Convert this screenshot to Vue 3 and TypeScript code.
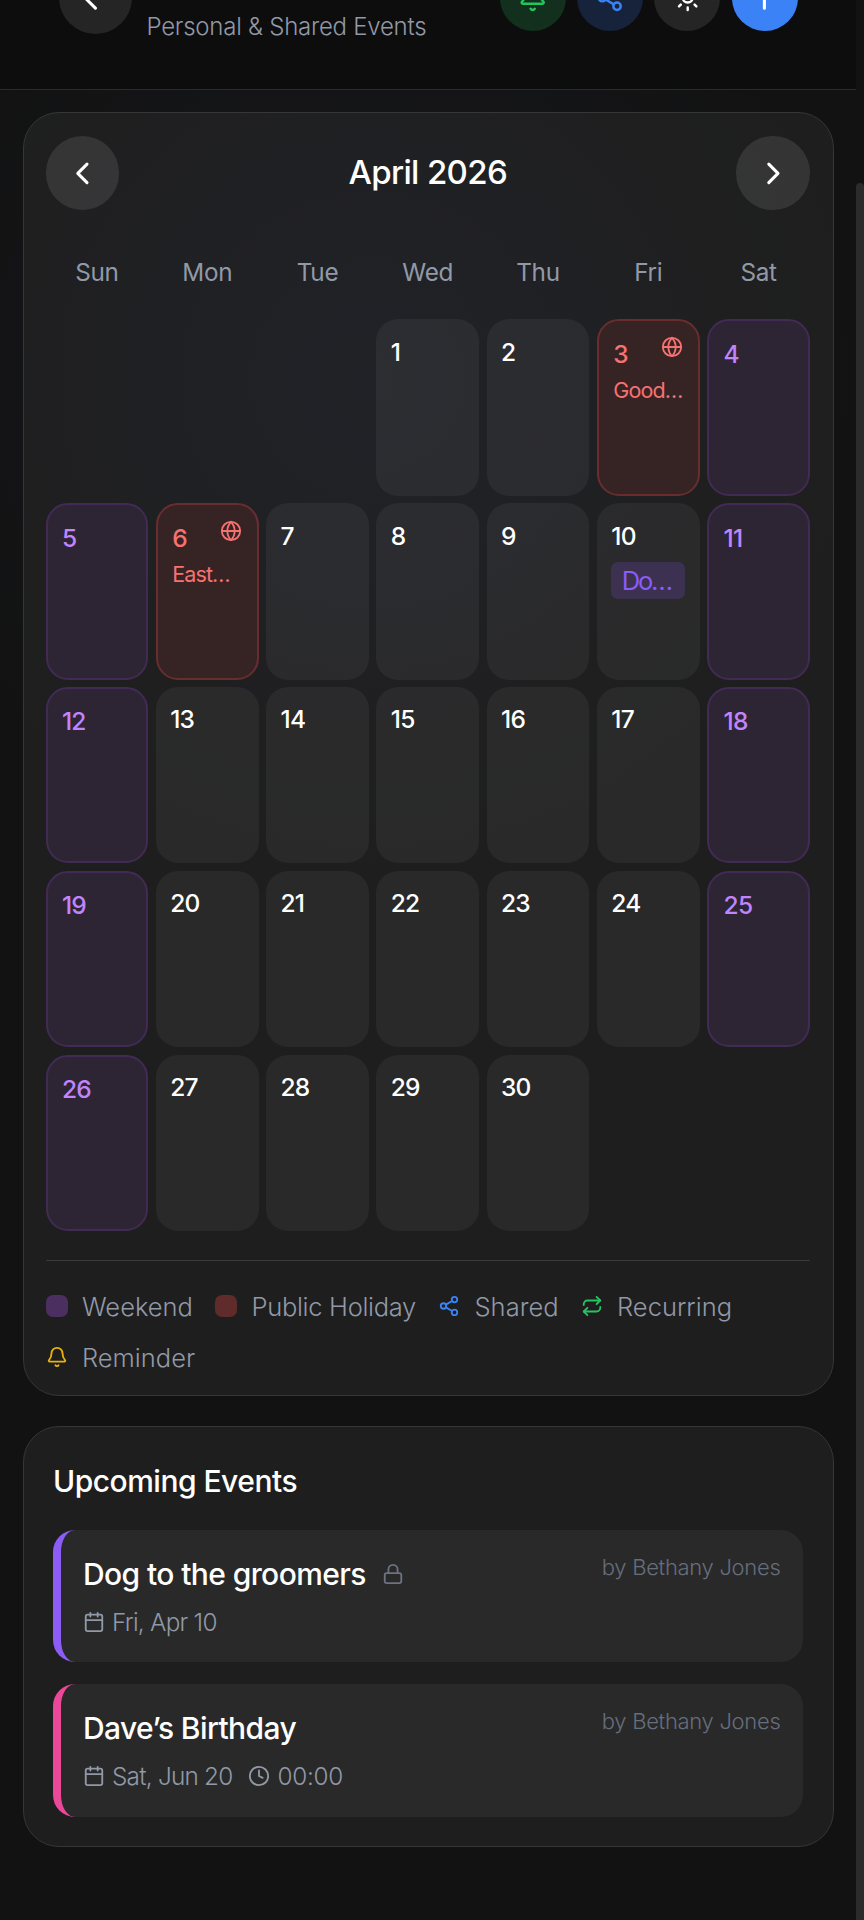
<script setup lang="ts">
interface DayCell {
  day: number | null
  kind: 'plain' | 'weekend' | 'holiday'
  holiday?: string
  event?: string
}
interface EventItem {
  title: string
  date: string
  time?: string
  author: string
  tone: 'violet' | 'pink'
  locked?: boolean
}

const weekdays: string[] = ['Sun', 'Mon', 'Tue', 'Wed', 'Thu', 'Fri', 'Sat']
const holidays: Record<number, string> = { 3: 'Good…', 6: 'East…' }
const dayEvents: Record<number, string> = { 10: 'Do…' }
const firstWeekday = 3

const cells: DayCell[] = []
for (let i = 0; i < firstWeekday; i++) cells.push({ day: null, kind: 'plain' })
for (let d = 1; d <= 30; d++) {
  const col = (d - 1 + firstWeekday) % 7
  const kind = holidays[d] ? 'holiday' : col === 0 || col === 6 ? 'weekend' : 'plain'
  cells.push({ day: d, kind, holiday: holidays[d], event: dayEvents[d] })
}

const events: EventItem[] = [
  { title: 'Dog to the groomers', date: 'Fri, Apr 10', author: 'by Bethany Jones', tone: 'violet', locked: true },
  { title: 'Dave’s Birthday', date: 'Sat, Jun 20', time: '00:00', author: 'by Bethany Jones', tone: 'pink' },
]
</script>

<template>
  <div class="screen">
    <div class="page">
      <header class="topbar">
        <button class="round back">
          <svg class="icon lg" viewBox="0 0 24 24"><path d="m12 19-7-7 7-7M19 12H5" /></svg>
        </button>
        <div class="heading">
          <h1>My Calendar</h1>
          <p>Personal &amp; Shared Events</p>
        </div>
        <div class="actions">
          <button class="round green">
            <svg class="icon md" viewBox="0 0 24 24"><path d="M10.268 21a2 2 0 0 0 3.464 0M3.262 15.326A1 1 0 0 0 4 17h16a1 1 0 0 0 .74-1.673C19.41 13.956 18 12.499 18 8A6 6 0 0 0 6 8c0 4.499-1.411 5.956-2.738 7.326" /></svg>
          </button>
          <button class="round blue">
            <svg class="icon md" viewBox="0 0 24 24"><circle cx="18" cy="5" r="3" /><circle cx="6" cy="12" r="3" /><circle cx="18" cy="19" r="3" /><path d="m8.59 13.51 6.83 3.98M15.41 6.51l-6.82 3.98" /></svg>
          </button>
          <button class="round">
            <svg class="icon md" viewBox="0 0 24 24"><circle cx="12" cy="12" r="4" /><path d="M12 2v2M12 20v2M4.93 4.93l1.41 1.41M17.66 17.66l1.41 1.41M2 12h2M20 12h2M6.34 17.66l-1.41 1.41M19.07 4.93l-1.41 1.41" /></svg>
          </button>
          <button class="round primary">
            <svg class="icon lg" viewBox="0 0 24 24"><path d="M5 12h14M12 5v14" /></svg>
          </button>
        </div>
      </header>

      <main class="content">
        <section class="card calendar">
          <div class="month-bar">
            <button class="round nav">
              <svg class="icon lg" viewBox="0 0 24 24"><path d="m15 18-6-6 6-6" /></svg>
            </button>
            <h2>April 2026</h2>
            <button class="round nav">
              <svg class="icon lg" viewBox="0 0 24 24"><path d="m9 18 6-6-6-6" /></svg>
            </button>
          </div>

          <div class="weekdays">
            <span v-for="w in weekdays" :key="w">{{ w }}</span>
          </div>

          <div class="grid">
            <div v-for="(c, i) in cells" :key="i" class="cell" :class="[c.kind, { empty: c.day === null }]">
              <template v-if="c.day !== null">
                <div class="cell-head">
                  <span class="num">{{ c.day }}</span>
                  <svg v-if="c.holiday" class="icon sm" viewBox="0 0 24 24"><circle cx="12" cy="12" r="10" /><path d="M12 2a14.5 14.5 0 0 0 0 20 14.5 14.5 0 0 0 0-20M2 12h20" /></svg>
                </div>
                <div v-if="c.holiday" class="holiday-name">{{ c.holiday }}</div>
                <div v-if="c.event" class="chip">{{ c.event }}</div>
              </template>
            </div>
          </div>

          <div class="legend">
            <span class="key"><i class="swatch weekend-key"></i>Weekend</span>
            <span class="key holiday-label"><i class="swatch holiday-key"></i>Public Holiday</span>
            <span class="key">
              <svg class="icon sm share" viewBox="0 0 24 24"><circle cx="18" cy="5" r="3" /><circle cx="6" cy="12" r="3" /><circle cx="18" cy="19" r="3" /><path d="m8.59 13.51 6.83 3.98M15.41 6.51l-6.82 3.98" /></svg>Shared
            </span>
            <span class="key">
              <svg class="icon sm repeat" viewBox="0 0 24 24"><path d="m17 2 4 4-4 4" /><path d="M3 11v-1a4 4 0 0 1 4-4h14M7 22l-4-4 4-4" /><path d="M21 13v1a4 4 0 0 1-4 4H3" /></svg>Recurring
            </span>
            <span class="key">
              <svg class="icon sm bell" viewBox="0 0 24 24"><path d="M10.268 21a2 2 0 0 0 3.464 0M3.262 15.326A1 1 0 0 0 4 17h16a1 1 0 0 0 .74-1.673C19.41 13.956 18 12.499 18 8A6 6 0 0 0 6 8c0 4.499-1.411 5.956-2.738 7.326" /></svg>Reminder
            </span>
          </div>
        </section>

        <section class="card upcoming">
          <h3>Upcoming Events</h3>
          <article v-for="e in events" :key="e.title" class="event" :class="e.tone">
            <div class="event-main">
              <div class="event-title">
                <span>{{ e.title }}</span>
                <svg v-if="e.locked" class="icon sm lock" viewBox="0 0 24 24"><rect x="3" y="11" width="18" height="11" rx="2" /><path d="M7 11V7a5 5 0 0 1 10 0v4" /></svg>
              </div>
              <div class="event-meta">
                <svg class="icon sm" viewBox="0 0 24 24"><path d="M8 2v4M16 2v4M3 10h18" /><rect x="3" y="4" width="18" height="18" rx="2" /></svg>
                <span class="date">{{ e.date }}</span>
                <template v-if="e.time">
                  <svg class="icon sm clock" viewBox="0 0 24 24"><circle cx="12" cy="12" r="10" /><path d="M12 6v6l4 2" /></svg>
                  <span class="time">{{ e.time }}</span>
                </template>
              </div>
            </div>
            <span class="author">{{ e.author }}</span>
          </article>
        </section>
      </main>
    </div>
    <div class="scroll-track"><div class="scroll-thumb"></div></div>
  </div>
</template>

<style>
body {
  background: #121212;
}
</style>

<style scoped>
.screen {
  display: flex;
  width: 864px;
  height: 1920px;
  overflow: hidden;
  background: #121212;
  color: #fff;
  font-family: Inter, "Noto Sans", sans-serif;
}
.page {
  width: 856px;
  background:
    radial-gradient(circle 500px at 370px 380px, rgba(90, 110, 190, 0.06), rgba(90, 110, 190, 0.03) 55%, rgba(90, 110, 190, 0)),
    #121212;
}
h1, h2, h3, p {
  margin: 0;
}
.icon {
  flex: none;
  fill: none;
  stroke: currentColor;
  stroke-width: 2;
  stroke-linecap: round;
  stroke-linejoin: round;
}
.lg { width: 36.8px; height: 36.8px; }
.md { width: 29.4px; height: 29.4px; }
.sm { width: 22px; height: 22px; }

.round {
  display: flex;
  flex: none;
  align-items: center;
  justify-content: center;
  width: 66px;
  height: 66px;
  padding: 0;
  border: 0;
  border-radius: 50%;
  background: #252525;
  color: #fff;
}
.back { width: 73px; height: 73px; }
.nav { width: 73.5px; height: 73.5px; background: rgba(255, 255, 255, 0.1); }
.green { background: #132f1d; color: #22c55e; }
.blue { background: #16233a; color: #3b82f6; }
.primary { background: #3b82f6; }

.topbar {
  display: flex;
  box-sizing: border-box;
  align-items: center;
  height: 184px;
  margin-top: -94px;
  padding: 0 58.5px 0 59px;
  border-bottom: 1px solid #2b2b2b;
  background: #0d0d0d;
}
.heading { margin-left: 14.5px; }
.heading h1 {
  height: 58px;
  font-size: 33px;
  font-weight: 600;
  line-height: 56px;
  letter-spacing: -0.6px;
}
.heading p {
  color: #9199a7;
  font-size: 24px;
  font-weight: 300;
  line-height: 32px;
  letter-spacing: -0.25px;
}
.actions {
  display: flex;
  gap: 11.2px;
  margin-left: auto;
}

.content {
  display: flex;
  flex-direction: column;
  gap: 30px;
  padding: 22px 22.5px 0 22.5px;
}
.card {
  box-sizing: border-box;
  border: 1px solid #363636;
  border-radius: 36px;
  background: rgba(255, 255, 255, 0.052);
}
.calendar {
  height: 1284px;
  padding: 23px 22.5px 0 22px;
}
.month-bar {
  display: flex;
  align-items: center;
  justify-content: space-between;
  height: 74px;
}
.month-bar h2 {
  font-size: 33px;
  font-weight: 550;
  line-height: 44px;
  letter-spacing: -0.65px;
  padding-bottom: 2px;
}
.weekdays {
  display: grid;
  grid-template-columns: repeat(7, 1fr);
  column-gap: 7.3px;
  margin-top: 44px;
  color: #9199a7;
  font-size: 24.3px;
  line-height: 36px;
  letter-spacing: -0.3px;
  text-align: center;
}
.grid {
  display: grid;
  grid-template-columns: repeat(7, 1fr);
  grid-auto-rows: 176.5px;
  gap: 7.35px;
  margin-top: 29.3px;
}
.cell {
  box-sizing: border-box;
  min-width: 0;
  padding: 13.5px 14.5px;
  border-radius: 22px;
  background: rgba(255, 255, 255, 0.05);
  overflow: hidden;
}
.cell.empty { background: none; }
.cell.weekend {
  border: 2px solid #412b55;
  background: #2e2534;
  color: #c084fc;
}
.cell.holiday {
  border: 2px solid #692d2e;
  background: #362425;
  color: #f87171;
}
.cell-head {
  display: flex;
  justify-content: space-between;
  height: 39.5px;
}
.cell-head .icon { margin-top: 1px; }
.num {
  font-size: 24.5px;
  font-weight: 450;
  line-height: 39px;
  letter-spacing: -0.8px;
}
.holiday-name {
  font-size: 21.5px;
  line-height: 32px;
  letter-spacing: -0.9px;
  white-space: nowrap;
}
.cell.holiday .holiday-name {
  margin-top: -0.5px;
}
.chip {
  height: 37px;
  margin-top: 6px;
  padding-left: 10.5px;
  border-radius: 7px;
  background: #3d3152;
  color: #8b5cf6;
  font-size: 25.5px;
  line-height: 37px;
  letter-spacing: -2.3px;
  white-space: nowrap;
}

.legend {
  display: flex;
  flex-wrap: wrap;
  column-gap: 22px;
  margin-top: 28.5px;
  padding-top: 20px;
  border-top: 1px solid #3a3a3a;
  color: #9199a7;
  font-size: 25.5px;
  font-weight: 300;
  line-height: 51px;
}
.key {
  display: flex;
  align-items: center;
  gap: 14.5px;
}
.holiday-label { letter-spacing: -0.3px; }
.swatch {
  width: 22px;
  height: 22px;
  border-radius: 7px;
}
.weekend-key { background: #4a2f60; }
.holiday-key { background: #5f2b2b; }
.share { color: #3b82f6; }
.repeat { color: #22c55e; }
.bell { color: #eab308; }

.upcoming {
  height: 421px;
  padding: 32px 30px 0 29.5px;
}
.upcoming h3 {
  margin-bottom: 26.5px;
  font-size: 30px;
  font-weight: 550;
  line-height: 44px;
  letter-spacing: -0.5px;
}
.event {
  display: flex;
  box-sizing: border-box;
  justify-content: space-between;
  height: 132.5px;
  margin-bottom: 22px;
  padding: 22px 22px 0 22px;
  border-left: 8px solid;
  border-radius: 22px;
  background: #292929;
}
.violet { border-color: #8b5cf6; }
.pink { border-color: #ec4899; }
.event-title {
  display: flex;
  align-items: center;
  gap: 16px;
  color: #fff;
  font-size: 30px;
  font-weight: 450;
  line-height: 44px;
  letter-spacing: -0.6px;
}
.lock { color: #6b7280; }
.event-meta {
  display: flex;
  align-items: center;
  margin-top: 9px;
  color: #9199a7;
  font-size: 24.3px;
  font-weight: 300;
  line-height: 34px;
  letter-spacing: -0.75px;
}
.date { margin-left: 7px; }
.clock { margin-left: 15.5px; }
.time { margin-left: 7.5px; letter-spacing: -0.3px; }
.author {
  color: #666e7c;
  font-size: 22px;
  font-weight: 300;
  line-height: 30px;
  letter-spacing: -0.3px;
}
.scroll-track {
  width: 8px;
  padding-top: 183px;
  background: #121212;
}
.scroll-thumb {
  height: 1900px;
  border-radius: 4px;
  background: #2b2b2b;
}
</style>
